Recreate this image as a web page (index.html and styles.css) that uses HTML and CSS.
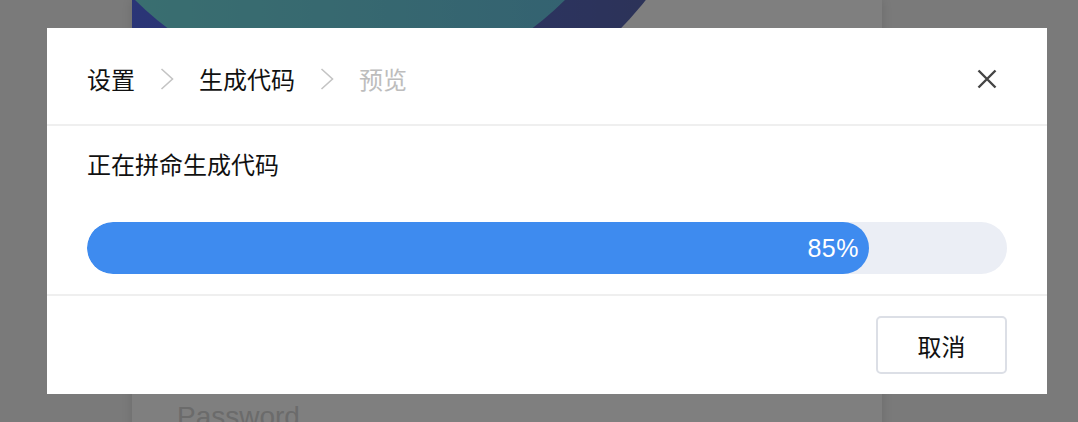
FILE: index.html
```html
<!DOCTYPE html>
<html lang="zh-CN">
<head>
  <meta charset="UTF-8" />
  <title>生成代码</title>
  <meta name="viewport" content="width=device-width, initial-scale=1" />
  <link rel="stylesheet" href="styles.css">
</head>
<body>

  <!-- page behind the dialog -->
  <div class="page">
    <div class="login-card">
      <div class="banner">
        <svg width="750" height="390" viewBox="0 0 750 390">
          <defs>
            <linearGradient id="navy" x1="0" y1="0" x2="1" y2="0">
              <stop offset="0" stop-color="#546cff" />
              <stop offset="1" stop-color="#5a66a8" />
            </linearGradient>
            <linearGradient id="teal" x1="0" y1="0" x2="1" y2="0">
              <stop offset="0" stop-color="#76e2e0" />
              <stop offset="1" stop-color="#66c0e2" />
            </linearGradient>
          </defs>
          <circle cx="224" cy="-230" r="370" fill="url(#navy)" />
          <circle cx="218" cy="-215" r="304" fill="url(#teal)" />
        </svg>
      </div>
      <div class="login-form">
        <div class="field">Password</div>
      </div>
    </div>
  </div>

  <div class="mask">
    <div class="dialog">
      <div class="dialog-header">
        <ol class="steps">
          <li class="step">设置</li>
          <li class="sep">
            <svg width="14" height="22" viewBox="0 0 14 22"><polyline points="1.5,1 12.5,11 1.5,21" /></svg>
          </li>
          <li class="step">生成代码</li>
          <li class="sep">
            <svg width="14" height="22" viewBox="0 0 14 22"><polyline points="1.5,1 12.5,11 1.5,21" /></svg>
          </li>
          <li class="step todo">预览</li>
        </ol>
        <button class="close" title="关闭">
          <svg width="20" height="20" viewBox="0 0 20 20"><path d="M1.5 1.5 L18.5 18.5 M18.5 1.5 L1.5 18.5" /></svg>
        </button>
      </div>

      <div class="dialog-body">
        <p class="status">正在拼命生成代码</p>
        <div class="progress">
          <div class="progress-bar" style="width: 85%"><span>85%</span></div>
        </div>
      </div>

      <div class="dialog-footer">
        <button class="btn">取消</button>
      </div>
    </div>
  </div>

</body>
</html>
```

FILE: styles.css
```css
:root {
  --text: #111111;
  --muted: #bdbdbd;
  --line: #efefef;
  --accent: #3e8bef;
  --track: #ebeef5;
  --border: #dcdfe6;
}

body {
  margin: 0;
  height: 422px;
  overflow: hidden;
  background: #f4f4f4;
  font-family: "Liberation Sans", "Noto Sans CJK SC", sans-serif;
  color: var(--text);
}

/* login page underneath */
.page {
  padding-left: 132px;
}

.login-card {
  width: 750px;
  background: #fff;
  box-shadow: 0 0 10px rgba(0, 0, 0, 0.12);
  min-height: 480px;
}

.banner {
  height: 390px;
  overflow: hidden;
}

.banner svg {
  display: block;
}

.login-form {
  padding: 10px 45px 0;
}

.field {
  font-size: 28px;
  line-height: 1.2;
  color: #d6d6d6;
}

/* dialog */
.mask {
  position: fixed;
  inset: 0;
  background: rgba(0, 0, 0, 0.5);
  display: flex;
  align-items: center;
  padding-left: 47px;
}

.dialog {
  width: 1000px;
  background: #fff;
  font-family: "Noto Sans CJK SC", "Liberation Sans", sans-serif;
  font-size: 24px;
}

.dialog-header {
  height: 98px;
  box-sizing: border-box;
  padding: 6px 50px 0 40px;
  display: flex;
  align-items: center;
  justify-content: space-between;
  border-bottom: 2px solid var(--line);
}

.steps {
  list-style: none;
  margin: 0;
  padding: 0;
  display: flex;
  align-items: center;
  gap: 25px;
  line-height: 32px;
}

.step.todo {
  color: var(--muted);
}

.sep svg {
  display: block;
  fill: none;
  stroke: #c4c4c4;
  stroke-width: 1.6;
}

.close {
  border: none;
  background: none;
  padding: 0;
  cursor: pointer;
}

.close svg {
  display: block;
  stroke: #444;
  stroke-width: 2.4;
}

.dialog-body {
  padding: 22px 40px 20px;
}

.status {
  margin: 0 0 42px;
  line-height: 32px;
}

.progress {
  height: 52px;
  border-radius: 26px;
  background: var(--track);
  overflow: hidden;
}

.progress-bar {
  height: 100%;
  border-radius: 26px;
  background: var(--accent);
  display: flex;
  align-items: center;
  justify-content: flex-end;
  padding-right: 10px;
  box-sizing: border-box;
}

.progress-bar span {
  color: #fff;
  font-family: "Liberation Sans", sans-serif;
  font-size: 25px;
  letter-spacing: 0.5px;
}

.dialog-footer {
  border-top: 2px solid var(--line);
  padding: 20px 40px;
  display: flex;
  justify-content: flex-end;
}

.btn {
  width: 131px;
  height: 58px;
  border: 2px solid var(--border);
  border-radius: 5px;
  background: #fff;
  color: var(--text);
  font-family: inherit;
  font-size: 24px;
  cursor: pointer;
}
```
